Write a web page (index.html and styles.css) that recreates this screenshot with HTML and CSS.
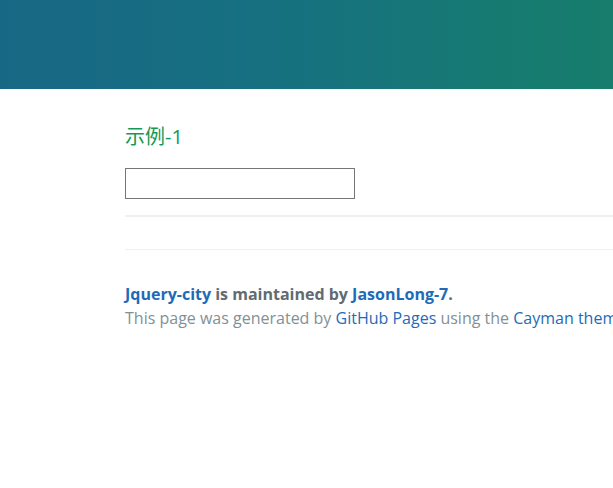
FILE: index.html
```html
<!DOCTYPE html>
<html lang="zh-CN">
<head>
    <meta charset="UTF-8">
    <meta name="viewport" content="width=device-width, initial-scale=1.0">
    <title>Jquery-city</title>
    <link rel="stylesheet" href="styles.css">
</head>
<body>
    <header class="page-header"></header>

    <main class="main-content">
        <h1>示例-1</h1>
        <input type="text" class="city-input">
        <hr>

        <footer class="site-footer">
            <span class="site-footer-owner"><a href="#">Jquery-city</a> is maintained by <a href="#">JasonLong-7</a>.</span>
            <span class="site-footer-credits">This page was generated by <a href="#">GitHub Pages</a> using the <a href="#">Cayman theme</a> by <a href="#">Jason Long</a>.</span>
        </footer>
    </main>
</body>
</html>
```

FILE: styles.css
```css
* {
    margin: 0;
    padding: 0;
    box-sizing: border-box;
}

html,
body {
    overflow: hidden;
}

body {
    font-family: 'Open Sans', 'Noto Sans CJK SC', sans-serif;
    font-size: 16px;
    line-height: 1.5;
    color: #606c71;
    background-color: #fff;
}

a {
    color: #1e6bb8;
    text-decoration: none;
}

.page-header {
    height: 89px;
    background: linear-gradient(90deg, #176884 0%, #176d82 30%, #16737d 55%, #167a72 80%, #177d6c 100%);
}

.main-content {
    width: 1000px;
    padding: 35px 0 60px 125px;
}

.main-content h1 {
    font-size: 20px;
    line-height: 25px;
    font-weight: normal;
    color: #159957;
    margin-bottom: 19px;
}

.city-input {
    display: block;
    width: 230px;
    height: 31px;
    border: 1px solid #767676;
    background: #fff;
}

.main-content hr {
    height: 2px;
    margin: 16px 0;
    border: 0;
    background-color: #eff0f1;
}

.site-footer {
    margin-top: 32px;
    padding-top: 32px;
    border-top: 1px solid #eff0f1;
}

.site-footer-owner {
    display: block;
    font-weight: bold;
}

.site-footer-credits {
    color: #819198;
}
```
